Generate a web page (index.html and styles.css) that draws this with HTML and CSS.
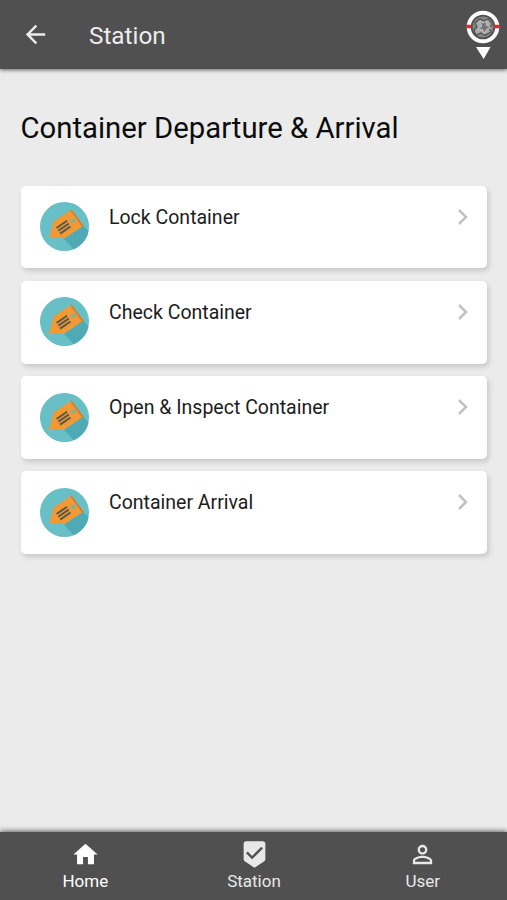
FILE: index.html
```html
<!DOCTYPE html>
<html lang="en">
<head>
<meta charset="utf-8">
<title>Station</title>
<link rel="stylesheet" href="styles.css">
</head>
<body>
<svg class="defs" aria-hidden="true">
  <symbol id="tag" viewBox="0 0 48 48">
    <clipPath id="disc"><circle cx="24" cy="24" r="24"/></clipPath>
    <circle cx="24" cy="24" r="24" fill="#68bfc6"/>
    <path d="M42 23L56 37L40 54L23.500 36Z" fill="#4faab5" clip-path="url(#disc)"/>
    <path d="M30.500 7.700L42.500 23.200L24.500 35.300L9 35.300L13.300 19.200Z" fill="#f19a35"/>
    <path d="M29.500 7.800L31 7.500L43 23.500L41.300 24.200Z" fill="#d9792a"/>
    <path d="M16.200 25.400L26.500 18.400M17.900 28.200L28.200 21.200M19.700 31L29.900 24" stroke="#58564b" stroke-width="1.900"/>
    <circle cx="32.500" cy="18.300" r="2.100" fill="#75b5a8"/>
    <path d="M33.500 17.500L35.800 15.800" stroke="#b0a270" stroke-width="1"/>
  </symbol>
  <symbol id="chevron" viewBox="0 0 12 18"><path d="M2 2L9 9L2 16" fill="none" stroke="#c2c2c2" stroke-width="2.500"/></symbol>
</svg>
<div class="app">
  <header class="bar">
    <svg class="icon" viewBox="0 0 24 24"><path d="M20 11H7.830l5.590-5.590L12 4l-8 8 8 8 1.410-1.410L7.830 13H20v-2z"/></svg>
    <span class="bar-title">Station</span>
    <svg class="logo" viewBox="0 0 36 52">
      <circle cx="18" cy="18" r="14.300" fill="#505050" stroke="#fff" stroke-width="4"/>
      <circle cx="18" cy="18" r="10.500" fill="#858585"/>
      <path d="M10 14l5-4 4 2 4-2 4 5-3 4 2 4-6 3-4-2-5 2-2-5 3-3z" fill="#a9a9a9" stroke="#505050" stroke-width="1.200"/>
      <path d="M14 12l3 5-4 3 5 1 1 4 3-5 4-1-5-3 1-4-4 2z" fill="#747474" stroke="#c8c8c8" stroke-width=".9"/>
      <path d="M1.300 15.800H6.500v3.500H1.300zM29.500 15.800h5.200v3.500h-5.200z" fill="#e3252d"/>
      <path d="M11 38h14.500L18.700 50z" fill="#fff"/>
    </svg>
  </header>
  <main class="content">
    <h1 class="heading">Container Departure &amp; Arrival</h1>
    <div class="cards">
      <div class="card"><svg class="tag"><use href="#tag"/></svg><span class="label">Lock Container</span><svg class="chevron"><use href="#chevron"/></svg></div>
      <div class="card"><svg class="tag"><use href="#tag"/></svg><span class="label">Check Container</span><svg class="chevron"><use href="#chevron"/></svg></div>
      <div class="card"><svg class="tag"><use href="#tag"/></svg><span class="label">Open &amp; Inspect Container</span><svg class="chevron"><use href="#chevron"/></svg></div>
      <div class="card"><svg class="tag"><use href="#tag"/></svg><span class="label">Container Arrival</span><svg class="chevron"><use href="#chevron"/></svg></div>
    </div>
  </main>
  <nav class="tabs">
    <div class="tab active"><svg class="icon" viewBox="0 0 24 24"><path d="M10 20v-6h4v6h5v-8h3L12 3 2 12h3v8z"/></svg><span>Home</span></div>
    <div class="tab"><svg class="icon" viewBox="0 0 24 24"><path d="M19 1H5c-1.100 0-1.990.9-1.990 2L3 15.930c0 .69.35 1.300.88 1.660L12 23l8.110-5.410c.53-.36.88-.97.88-1.660L21 3c0-1.100-.9-2-2-2zm-9 15l-5-5 1.410-1.410L10 13.170l7.590-7.590L19 7l-9 9z"/></svg><span>Station</span></div>
    <div class="tab"><svg class="icon" viewBox="0 0 24 24"><path d="M12 5.900a2.100 2.100 0 1 1 0 4.200 2.100 2.100 0 0 1 0-4.200m0 9c2.970 0 6.100 1.460 6.100 2.100v1.100H5.900V17c0-.64 3.130-2.100 6.100-2.100M12 4C9.790 4 8 5.790 8 8s1.790 4 4 4 4-1.790 4-4-1.790-4-4-4zm0 9c-2.670 0-8 1.340-8 4v3h16v-3c0-2.660-5.330-4-8-4z"/></svg><span>User</span></div>
  </nav>
</div>
</body>
</html>
```

FILE: styles.css
```css
* { box-sizing: border-box; }
body { margin: 0; font-family: Roboto, "Liberation Sans", sans-serif; }
.defs { position: absolute; width: 0; height: 0; }
.app { display: flex; flex-direction: column; height: 900px; background: #ebebeb; overflow: hidden; }
.bar {
  display: flex; align-items: center; height: 69px; flex: none;
  padding: 0 6px 0 21px; background: #505050; color: #ececec;
  box-shadow: 0 1px 4px rgba(0, 0, 0, .6);
}
.icon { display: block; width: 29px; height: 29px; fill: currentColor; }
.bar-title { margin-left: 39px; flex: 1; font-size: 24.300px; line-height: 30px; padding-top: 2px; }
.logo { width: 36px; height: 52px; margin-top: 1px; }
.content { flex: 1; padding: 40px 20px 0 20.500px; }
.heading { margin: 0; font-size: 29.300px; line-height: 38px; font-weight: 400; color: #0c0c0c; white-space: nowrap; }
.cards { display: flex; flex-direction: column; gap: 12.500px; margin-top: 38.500px; }
.card {
  display: flex; align-items: flex-start; height: 82.800px; padding: 16.600px 18.500px 0 19.500px;
  background: #fff; border-radius: 5px; box-shadow: 2px 3px 5px rgba(0, 0, 0, .15);
}
.tag { width: 49px; height: 49px; flex: none; }
.label { flex: 1; margin: 3.500px 0 0 20px; font-size: 19.500px; line-height: 24px; color: #1c1c1c; }
.chevron { width: 12px; height: 18px; margin-top: 5.500px; }
.tabs {
  display: flex; height: 68px; flex: none; background: #505050; color: #e8e8e8;
  box-shadow: 0 -1px 5px rgba(0, 0, 0, .6);
}
.tab { flex: 1; display: flex; flex-direction: column; align-items: center; padding-top: 8px; font-size: 17px; line-height: 24px; }
.active { color: #fff; padding-left: 1px; }
```
